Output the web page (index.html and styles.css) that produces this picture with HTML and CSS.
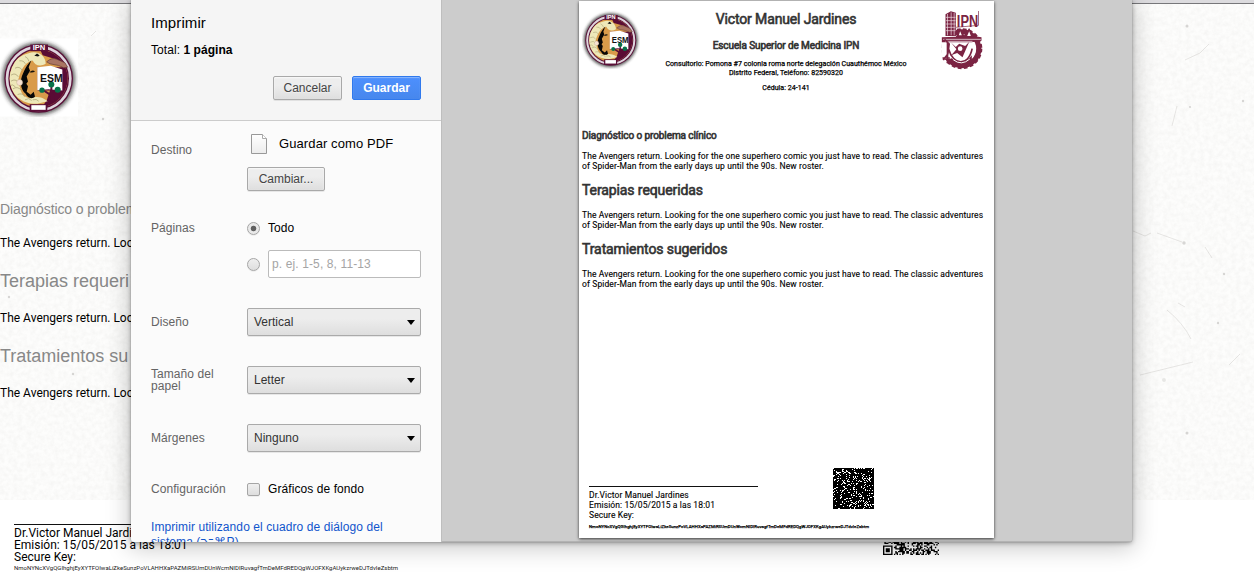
FILE: index.html
```html
<!DOCTYPE html>
<html lang="es">
<head>
<meta charset="utf-8">
<title>Imprimir</title>
<link rel="stylesheet" href="styles.css">
</head>
<body>
<svg class="defs" aria-hidden="true">
  <defs>
    <filter id="paper" x="0" y="0" width="100%" height="100%">
      <feTurbulence type="fractalNoise" baseFrequency="0.22" numOctaves="4" seed="8"/>
      <feColorMatrix values="0 0 0 0 0.5  0 0 0 0 0.49  0 0 0 0 0.47  0.2 0 0 0 -0.062"/>
    </filter>
    <filter id="soft" x="-20%" y="-20%" width="140%" height="140%"><feGaussianBlur stdDeviation="6"/></filter>
    <clipPath id="disc"><circle cx="116" cy="234" r="87"/></clipPath>
    <symbol id="esm" viewBox="0 114 234 234">
      <rect y="114" width="234" height="234" fill="#fff"/>
      <circle cx="116" cy="234" r="109" fill="#222" opacity=".75" filter="url(#soft)"/>
      <circle cx="116" cy="234" r="103" fill="#5b1038"/>
      <circle cx="116" cy="234" r="95" fill="none" stroke="#ded5dd" stroke-width="8"/>
      <g clip-path="url(#disc)">
        <rect x="20" y="140" width="190" height="190" fill="#d99b4a"/>
        <path d="M120 146C170 150 210 190 208 240C204 300 170 324 120 328L140 300L150 270L112 270V200H186L168 176L128 164Z" fill="#5a0c35"/>
        <path d="M76 174C108 168 122 184 112 202V270L96 292C70 288 66 266 80 256L68 244L74 226L62 210Z" fill="#d99b4a"/>
        <path d="M26 220C36 182 58 164 86 158C110 148 138 164 137 190C120 200 104 194 98 180C72 184 58 218 54 244C64 264 58 286 90 294C120 282 136 298 143 302L112 310C62 312 24 278 26 220Z" fill="#eee8b9"/>
        <path d="M33 224q13-9 22 5M33 242q13-9 23 5M39 265q13-9 25 4M45 203q14-7 21 6M58 181q13-2 18 9M75 168q10 4 12 15M53 282q15-6 21 7M75 298q12-8 20 2M27 256q12-7 19 3M98 298q12-4 18 4" fill="none" stroke="#a49c6f" stroke-width="2"/>
        <path d="M94 179L86 200L90 211L80 228L84 243L79 250L84 257L80 274L92 283L101 274L105 288C98 296 84 295 77 280C61 267 58 240 70 217C76 200 86 188 94 179Z" fill="#080706"/>
        <path d="M88 215q10-9 17-2q-7 5-17 2" fill="#17120c"/>
        <circle cx="59" cy="246" r="9" fill="#f7e2d2" stroke="#ad997b"/>
      </g>
      <path d="M140 184q15-14 30-8l25 11l8 13l-12 2l-15-7l-26-5z" fill="#aa7563" stroke="#633b37" stroke-width="2"/>
      <path d="M112 200L152 196L187 207V270L145 266L112 269Z" fill="#fff"/>
      <path d="M103 166l8-7l8 6l-5 3z" fill="#111"/>
      <path d="M151 304L150 286L126 270L130 266L150 278L152 254H157V278L171 266L176 270L163 286L166 304Z" fill="#5a0c35"/>
      <circle cx="154" cy="252" r="9" fill="#087149"/><circle cx="126" cy="269" r="8" fill="#087149"/><circle cx="173" cy="268" r="9" fill="#087149"/>
      <text x="120" y="245" class="esm-word" textLength="68" lengthAdjust="spacingAndGlyphs">ESM</text>
      <path d="M91 132H144V152H91Z" fill="#5b1038"/>
      <text x="98" y="149" class="ipn-word" textLength="38" lengthAdjust="spacingAndGlyphs">IPN</text>
      <path d="M89 311H142V334H89Z" fill="#5b1038"/><path d="M94 314H137V328H94Z" fill="#fff"/>
    </symbol>
  </defs>
</svg>

<main class="sheet">
  <div class="top-rule"></div>
  <section class="record">
    <svg class="record-logo"><use href="#esm"/></svg>
    <h3 class="record-small">Diagnóstico o problem</h3>
    <p class="record-text">The Avengers return. Loo</p>
    <h2 class="record-title">Terapias requeri</h2>
    <p class="record-text">The Avengers return. Loo</p>
    <h2 class="record-title">Tratamientos su</h2>
    <p class="record-text">The Avengers return. Loo</p>
    <svg class="grain" width="1254" height="496">
      <rect width="1254" height="496" filter="url(#paper)"/>
      <g fill="none" stroke="#77736b" stroke-opacity=".16"><path d="M1140 371l53-13M1167 306q16 13 24 29M1185 56l15-7l9-9M1133 227l12 5l6-3M1157 229l25 9M1205 243l7 11M1177 102l-5 20M9 83l12-6M1178 299l7 4M1240 350l-11 11M96 27l-5 5"/></g>
      <g fill="#68645e" fill-opacity=".25"><circle cx="1187" cy="22" r="1.5"/><circle cx="1184" cy="239" r="1.7"/><circle cx="1243" cy="97" r="1.2"/><circle cx="1224" cy="270" r="1.2"/><circle cx="1218" cy="319" r="1.2"/><circle cx="1164" cy="376" r="2" opacity=".5"/><circle cx="1187" cy="429" r="1.5"/><circle cx="1190" cy="103" r="1"/><circle cx="9" cy="293" r="1.2"/><circle cx="73" cy="370" r="1.2"/><circle cx="103" cy="115" r="1.2"/></g>
    </svg>
  </section>
  <footer class="record-foot">
    <div class="sign">
      <div class="sign-rule"></div>
      <div>Dr.Victor Manuel Jardines</div>
      <div>Emisión: 15/05/2015 a las 18:01</div>
      <div>Secure Key:</div>
      <div class="key">NmoNYNcXVgQGIhghjEyXYTFOIwaLiZkeSunzPoVLAHHXaPAZMiRSUmDUnWcmNlDIRuvagfTmDeMFdREDQgWJOFXKgAUykzrweDJTdvIeZsbtm</div>
    </div>
    <svg class="code code-large" id="code-large" viewBox="0 0 41 41"></svg>
  </footer>
</main>

<div class="dialog">
  <aside class="side">
    <header class="head">
      <h1 class="head-title">Imprimir</h1>
      <p class="total">Total: <b>1 página</b></p>
      <div class="actions"><button class="btn cancel">Cancelar</button><button class="btn primary">Guardar</button></div>
    </header>
    <div class="settings">
      <div class="row destination">
        <span class="label">Destino</span>
        <div>
          <div class="target"><svg width="18" height="22" viewBox="0 0 18 22"><defs><linearGradient id="pg" x2="0" y2="1"><stop stop-color="#fff"/><stop offset="1" stop-color="#ececec"/></linearGradient></defs><path d="M1.5 1.5h11l4 4v15h-15z" fill="url(#pg)" stroke="#999"/><path d="M12.5 1.5v4h4" fill="#fff" stroke="#aaa"/></svg><span>Guardar como PDF</span></div>
          <button class="btn change">Cambiar...</button>
        </div>
      </div>
      <div class="row pages">
        <span class="label">Páginas</span>
        <div>
          <div class="option"><i class="radio on"></i><span class="all">Todo</span></div>
          <div class="option range"><i class="radio"></i><div class="field">p. ej. 1-5, 8, 11-13</div></div>
        </div>
      </div>
      <div class="row pick"><span class="label">Diseño</span><div class="select">Vertical<i class="arrow"></i></div></div>
      <div class="row pick"><span class="label two">Tamaño del<br>papel</span><div class="select">Letter<i class="arrow"></i></div></div>
      <div class="row pick"><span class="label">Márgenes</span><div class="select">Ninguno<i class="arrow"></i></div></div>
      <div class="row config"><span class="label">Configuración</span><div class="option"><i class="check"></i><span class="graphics">Gráficos de fondo</span></div></div>
      <div class="system">Imprimir utilizando el cuadro de diálogo del<br>sistema (⌥⌘P)</div>
    </div>
  </aside>
  <section class="preview">
    <article class="paper">
      <header class="paper-head">
        <svg class="seal"><use href="#esm"/></svg>
        <div class="doctor">
          <h1>Victor Manuel Jardines</h1>
          <h2>Escuela Superior de Medicina IPN</h2>
          <p class="addr">Consultorio: Pomona #7 colonia roma norte delegación Cuauthémoc México</p>
          <p class="city">Distrito Federal, Teléfono: 82590320</p>
          <p class="license">Cédula: 24-141</p>
        </div>
        <svg class="crest" viewBox="484 30 128 180">
          <circle cx="546" cy="146" r="50" fill="none" stroke="#7b2443" stroke-width="17"/>
          <circle cx="546" cy="146" r="57" fill="none" stroke="#7b2443" stroke-width="9" stroke-dasharray="11 7"/>
          <circle cx="546" cy="146" r="43" fill="#fff"/>
          <path d="M484 60H526V176H484Z" fill="#fff"/>
          <path d="M497 43L513 34L528 38V108H497Z" fill="#7b2443"/>
          <path d="M503 42V106M514 37V106M523 39V106M498 52H527M498 62H527M498 72H527M498 82H527M498 92H527" stroke="#f0dfe5" stroke-width="2"/>
          <text x="531" y="80" class="crest-word" textLength="64" lengthAdjust="spacingAndGlyphs">IPN</text>
          <path d="M528 82L596 76V33" fill="none" stroke="#7b2443" stroke-width="2"/>
          <path d="M528 110L541 86L553 106L568 84L580 108L605 112V122L575 127H486V112Z" fill="#7b2443"/>
          <path d="M537 106l4-12l5 12zM562 108l6-14l5 14z" fill="#fff"/>
          <path d="M490 118H603M496 124H578" stroke="#fff" stroke-width="2"/>
          <path d="M494 118L508 132L504 162L490 180M503 124V190M488 174H510M506 146C520 198 566 200 577 146" fill="none" stroke="#7b2443" stroke-width="5"/>
          <path d="M514 128L530 148L514 166L532 159L548 172L568 126L556 138L538 131L528 141Z" fill="#7b2443"/>
          <circle cx="541" cy="146" r="9" fill="#fff" stroke="#7b2443" stroke-width="4"/>
          <path d="M514 173Q545 205 576 166V184Q545 212 516 188Z" fill="#7b2443"/><path d="M520 179Q545 199 570 177" fill="none" stroke="#fff" stroke-width="3"/>
        </svg>
      </header>
      <div class="paper-body">
        <h3>Diagnóstico o problema clínico</h3>
        <p>The Avengers return. Looking for the one superhero comic you just have to read. The classic adventures<br>of Spider-Man from the early days up until the 90s. New roster.</p>
        <h2 class="therapies">Terapias requeridas</h2>
        <p>The Avengers return. Looking for the one superhero comic you just have to read. The classic adventures<br>of Spider-Man from the early days up until the 90s. New roster.</p>
        <h2 class="treatments">Tratamientos sugeridos</h2>
        <p>The Avengers return. Looking for the one superhero comic you just have to read. The classic adventures<br>of Spider-Man from the early days up until the 90s. New roster.</p>
      </div>
      <footer class="paper-foot">
        <div class="mini-sign">
          <div class="mini-rule"></div>
          <div>Dr.Victor Manuel Jardines</div>
          <div>Emisión: 15/05/2015 a las 18:01</div>
          <div>Secure Key:</div>
          <div class="mini-key">NmoNYNcXVgQGIhghjEyXYTFOIwaLiZkeSunzPoVLAHHXaPAZMiRSUmDUnWcmNlDIRuvagfTmDeMFdREDQgWJOFXKgAUykzrweDJTdvIeZsbtm</div>
        </div>
        <svg class="code code-small" id="code-small" viewBox="0 0 41 41"></svg>
      </footer>
    </article>
  </section>
</div>
<script src="codes.js"></script>
</body>
</html>
```

FILE: styles.css
```css
* { box-sizing: border-box; }
html, body { margin: 0; width: 1254px; height: 578px; overflow: hidden; background: #fff; }
body { position: relative; font-family: "Liberation Sans", Arial, sans-serif; color: #000; }
h1, h2, h3, p { margin: 0; font-weight: 400; }
.defs { position: absolute; width: 0; height: 0; }
.esm-word { font: bold 34px "Liberation Sans", sans-serif; fill: #111; }
.ipn-word { font: bold 22px "Liberation Sans", sans-serif; fill: #fff; }
.crest-word { font: bold 52px "Liberation Sans", sans-serif; fill: #7b2443; }

.sheet { width: 1254px; height: 578px; white-space: nowrap; overflow: hidden; }
.top-rule { height: 4px; background: #dcdbde; border-bottom: 1px solid #77777a; }
.record { position: relative; isolation: isolate; height: 496px; background: #fdfdfc; padding-top: 34px; }
.grain { position: absolute; inset: 0; z-index: -1; }
.record-logo { display: block; width: 78px; height: 79px; }
.record-small { margin-top: 82px; font-size: 14px; line-height: 20px; color: #888; letter-spacing: -.1px; }
.record-text { margin-top: 14px; font: 12px/20px Roboto, sans-serif; }
.record-title { margin-top: 15px; font-size: 18px; line-height: 26px; color: #888; }
.record-foot { display: flex; padding-left: 14px; }
.sign { width: 869px; padding-top: 24px; font: 12px/12px Roboto, sans-serif; }
.sign-rule { width: 230px; height: 1px; background: #111; margin-bottom: 2px; }
.key { margin-top: 1px; font-size: 6px; line-height: 7px; letter-spacing: .012px; color: #222; }
.code-large { width: 56px; height: 56px; margin-top: -1px; }
.code { display: block; flex: none; }

.dialog { position: absolute; left: 131px; top: 0; z-index: 2; width: 1001px; height: 542px; display: flex; overflow: hidden; border-radius: 0 0 3px 3px; background: #ccc; box-shadow: 0 4px 23px 2px rgba(0,0,0,.22), 0 1px 5px rgba(0,0,0,.32), 0 0 1px rgba(0,0,0,.6); }
.side { width: 311px; height: 542px; overflow: hidden; background: #fbfbfb; border-right: 1px solid #bebebe; }
.head { height: 121px; padding: 13px 20px 0; border-bottom: 1px solid #ccc; background: #f5f5f5; }
.head-title { font-size: 15px; line-height: 20px; letter-spacing: .1px; }
.total { margin-top: 8px; font-size: 12px; line-height: 18px; letter-spacing: .06px; }
.actions { display: flex; gap: 10px; justify-content: flex-end; margin-top: 17px; }
.btn { display: block; width: 69px; height: 24px; padding: 0; border: 1px solid #a9a9a9; border-radius: 2px; background: linear-gradient(#ededed 38%, #dedede); box-shadow: 0 1px 0 rgba(0,0,0,.08), inset 0 1px 2px rgba(255,255,255,.75); font: 12px/22px "Liberation Sans", sans-serif; color: #444; text-shadow: 0 1px 0 #f0f0f0; }
.primary { border-color: #3079ed; background: linear-gradient(#4d90fe, #4787ed); color: #fff; font-weight: 700; text-shadow: none; box-shadow: inset 0 1px 1px rgba(255,255,255,.35); }
.settings { color: #000; font-size: 12px; }
.row { display: grid; grid-template-columns: 96px 174px; padding-left: 20px; }
.label { color: #646464; line-height: 16px; letter-spacing: .06px; }
.destination { height: 89px; padding-top: 11px; }
.destination .label { padding-top: 10px; }
.target { display: flex; height: 23px; padding-left: 3px; gap: 11px; align-items: center; font-size: 13px; letter-spacing: .1px; white-space: nowrap; }
.change { width: 78px; margin-top: 12px; }
.pages { height: 83px; padding-top: 10px; }
.option { display: flex; align-items: center; gap: 8px; line-height: 16px; letter-spacing: .08px; }
.range { margin-top: 14px; }
.radio, .check { display: block; flex: none; width: 13px; height: 13px; border: 1px solid #a5a5a5; background: linear-gradient(#efefef, #dedede); box-shadow: 0 1px 0 rgba(0,0,0,.05); }
.radio { border-radius: 50%; }
.on { background: radial-gradient(circle, #606060 0 2.4px, #e9e9e9 3.2px); }
.check { border-radius: 2px; }
.field { width: 153px; height: 28px; padding-left: 3px; border: 1px solid #bbb; border-radius: 2px; background: #fff; color: #a5a5a5; line-height: 26px; letter-spacing: .12px; }
.pick { height: 58px; padding-top: 15px; }
.pick .label { padding-top: 6px; }
.pick .two { padding-top: 2px; line-height: 12px; }
.select { display: flex; justify-content: space-between; align-items: center; height: 28px; padding: 0 5px 0 6px; border: 1px solid #aaa; border-radius: 2px; background: linear-gradient(#ededed 38%, #dedede); box-shadow: 0 1px 0 rgba(0,0,0,.08); color: #333; }
.arrow { border: 4.5px solid transparent; border-top: 5px solid #000; border-bottom: 0; }
.config { height: 44px; align-items: center; }
.system { padding: 9px 0 0 20px; color: #15c; line-height: 15px; letter-spacing: .08px; white-space: nowrap; }

.preview { width: 690px; height: 542px; padding: 1px 0 0 137px; background: #ccc; border-bottom: 1px solid #b3b3b3; }
.paper { display: flex; flex-direction: column; width: 415px; height: 537px; background: #fff; box-shadow: 0 1px 3px rgba(0,0,0,.75); font-family: Roboto, sans-serif; white-space: nowrap; }
.paper-head { display: flex; height: 124px; padding: 9px 10px 0 3px; justify-content: space-between; }
.seal { flex: none; width: 58px; height: 59px; }
.crest { flex: none; width: 43px; height: 60px; }
.doctor { width: 285px; text-align: center; margin-right: 9px; }
.doctor h1, .doctor h2, .paper-body h2, .paper-body h3 { color: #333; -webkit-text-stroke: .6px #333; }
.doctor h1 { font-size: 14px; line-height: 19px; letter-spacing: -.13px; }
.doctor h2 { margin-top: 9px; font-size: 10px; line-height: 15px; letter-spacing: -.1px; }
.doctor p { font-size: 7px; line-height: 9px; letter-spacing: .05px; -webkit-text-stroke: .25px #000; }
.doctor .addr { margin-top: 7px; }
.doctor .license { margin-top: 6px; }
.paper-body { height: 343px; padding: 4px 0 0 3px; }
.paper-body h3 { font-size: 10px; line-height: 14px; margin-bottom: 8px; letter-spacing: -.09px; }
.paper-body h2 { font-size: 14px; line-height: 20px; margin: 9px 0 10px; letter-spacing: -.1px; }
.paper-body p { font-size: 8.5px; line-height: 10px; letter-spacing: .11px; -webkit-text-stroke: .12px #000; }
.paper-foot { display: flex; padding-left: 10px; }
.mini-sign { width: 244px; padding-top: 18px; font-size: 8.5px; line-height: 10px; letter-spacing: .1px; -webkit-text-stroke: .12px #000; }
.mini-rule { width: 169px; height: 1px; margin-bottom: 3px; background: #111; }
.mini-key { margin-top: 3px; font-size: 4.3px; line-height: 8px; letter-spacing: .055px; -webkit-text-stroke: .25px #000; }
.code-small { width: 41px; height: 41px; }
```

FILE: codes.js
```js
// Fills each matrix code with modules from a small repeatable generator.
function drawCode(id, density, seed, finders) {
  const n = 41;
  let state = seed;
  let d = "";
  const ring = (x, y) => {
    const inside = x >= 0 && y >= 0 && x < 8 && y < 8;
    if (!inside) return null;
    if (x === 7 || y === 7) return false;
    return x === 0 || y === 0 || x === 6 || y === 6 || (x > 1 && x < 5 && y > 1 && y < 5);
  };
  for (let y = 0; y < n; y++) {
    for (let x = 0; x < n; x++) {
      state = (state * 1664525 + 1013904223) >>> 0;
      let on = state / 4294967296 < density;
      if (finders) {
        const f = ring(x, y) ?? ring(n - 1 - x, y) ?? ring(x, n - 1 - y);
        if (f !== null) on = f;
      }
      if (on) d += `M${x} ${y}h1v1h-1z`;
    }
  }
  document.getElementById(id).innerHTML = `<path d="${d}" fill="#000"/>`;
}
drawCode("code-large", 0.52, 731, true);
drawCode("code-small", 0.83, 1907, false);
```
